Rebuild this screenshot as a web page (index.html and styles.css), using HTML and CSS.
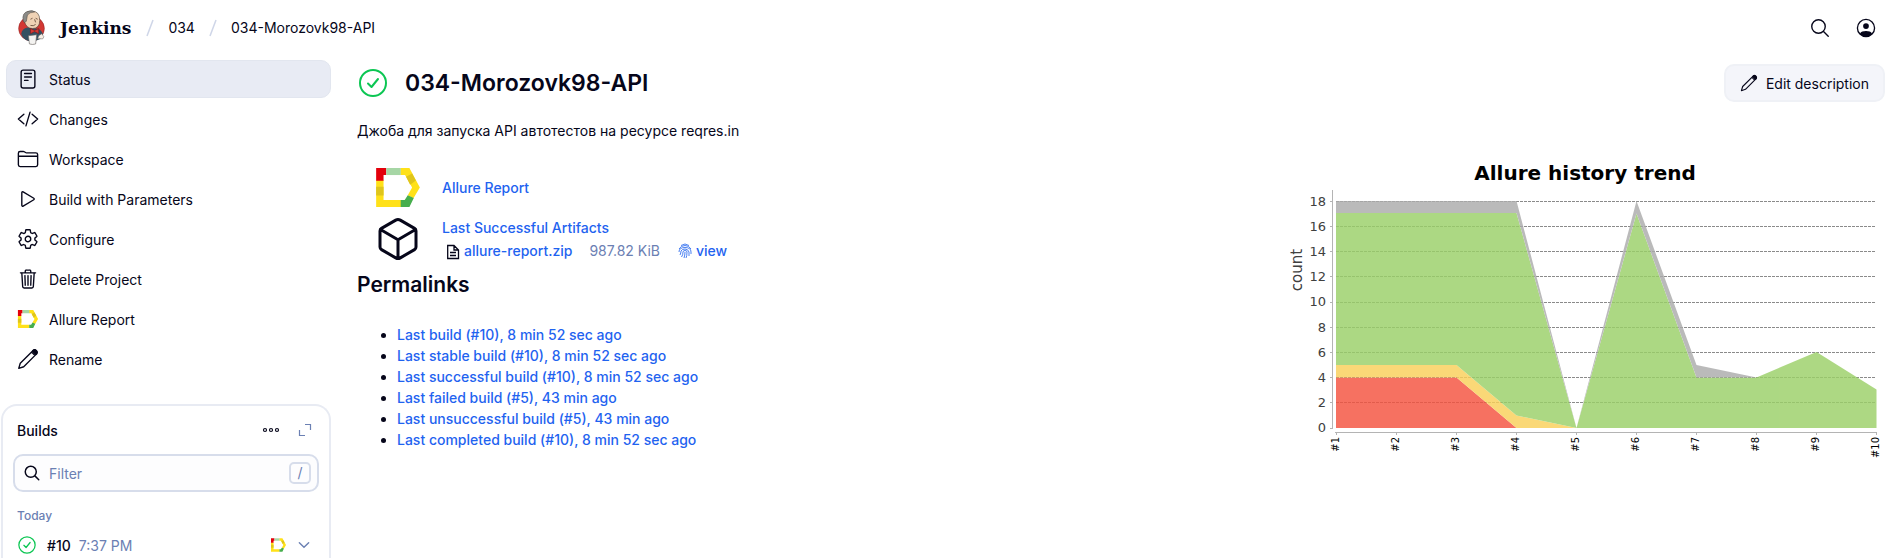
FILE: index.html
```html
<!DOCTYPE html>
<html lang="en">
<head>
<meta charset="utf-8">
<title>034-Morozovk98-API [Jenkins]</title>
<link rel="stylesheet" href="styles.css">
</head>
<body>
<svg class="sprite" aria-hidden="true">
  <symbol id="search" viewBox="0 0 512 512"><path d="M221.09 64a157.09 157.09 0 10157.09 157.09A157.1 157.1 0 00221.09 64zM338.29 338.29L448 448"/></symbol>
  <symbol id="pencil" viewBox="0 0 512 512"><path d="M40 474l36-118L352 80q14-14 28-28 32-24 62 4l14 14q28 30 4 62l-28 28-276 276zM340 94l78 78"/><path fill="currentColor" d="M384 50q32-20 62 10l6 6q30 30 10 62l-24 22-76-76z"/></symbol>
  <symbol id="check" viewBox="0 0 512 512"><circle cx="256" cy="256" r="208"/><path d="M336 192L232 320l-56-56"/></symbol>
  <symbol id="allure" viewBox="0 0 130 116"><g stroke="none">
    <path fill="#ffe119" d="M0 36h22v59h52v21H0zM72 0h27l31 58-19 32-17-9 13-23-21-37H72z"/>
    <path fill="#dfc51c" d="M0 56h22v26H0zM89 26l18-10 11 21-17 13z"/>
    <path fill="#e3000b" d="M0 0h30v21h-8v17H0z"/>
    <path fill="#a6d6a5" d="M30 0h43v21H30z"/>
    <path fill="#47ae4d" d="M73 95h12l9-14 18 8-13 27H73z"/></g></symbol>
</svg>

<header class="header">
  <a class="brand" href="#">
    <svg class="logo" viewBox="0 0 26 34" aria-hidden="true">
      <ellipse cx="13" cy="18" rx="12.500" ry="12" fill="#d33833" stroke="#8d1f20" stroke-width=".5"/>
      <path d="M3 23Q4 18 9 17l8 1q5 0 7 5l-1 4Q18 31 10 30 4 28 3 23z" fill="#335061"/>
      <path d="M6 11Q4 1 13 1q8 0 8 9 0 8-7 8-6 0-8-7z" fill="#efd2b5" stroke="#4b423c" stroke-width=".6"/>
      <path d="M5 11Q3 2 11 1q3-1 5 1-5 0-7 3l-1 6-2 1z" fill="#8a8a87" stroke="#4b423c" stroke-width=".5"/>
      <path d="M12 9l2-1M17 8l2 1M16 9l1 3M12 15q3 1 5-1" fill="none" stroke="#5e4636" stroke-width=".8"/>
      <path d="M12 18l4 2 4-2v5l-4-2-4 2z" fill="#d33833" stroke="#81100f" stroke-width=".5"/>
      <path d="M10 25l8-1-1 9q-3 1-6 0z" fill="#f4f3f1" stroke="#6b6561" stroke-width=".6"/>
      <path d="M20 25l3-2 2 3-1 2-5 0z" fill="#f6eee5" stroke="#6b6561" stroke-width=".5"/>
    </svg>
    <span class="brand-name">Jenkins</span>
  </a>
  <nav class="crumbs" aria-label="Breadcrumbs">
    <svg class="slash" viewBox="0 0 8 18" aria-hidden="true"><path d="M7 1L1 17"/></svg>
    <a href="#">034</a>
    <svg class="slash" viewBox="0 0 8 18" aria-hidden="true"><path d="M7 1L1 17"/></svg>
    <a href="#">034-Morozovk98-API</a>
  </nav>
  <div class="header-actions">
    <button type="button" aria-label="Search"><svg class="icon"><use href="#search"/></svg></button>
    <button type="button" aria-label="Account"><svg class="avatar" viewBox="0 0 20 20"><circle cx="10" cy="10" r="7.800" fill="none" stroke="currentColor" stroke-width="1.2"/><circle cx="10" cy="8.200" r="2.600"/><path d="M4.500 15Q6 12.800 10 12.800T15.500 15Q13.500 18 10 18T4.500 15z"/></svg></button>
  </div>
</header>

<div class="page">
  <aside class="sidebar">
    <nav class="tasks" aria-label="Tasks">
      <a class="task active" href="#"><svg class="icon" viewBox="0 0 512 512"><rect x="96" y="48" width="320" height="416" rx="48"/><path d="M176 128h160M176 208h160M176 288h80"/></svg>Status</a>
      <a class="task" href="#"><svg class="icon" viewBox="0 0 512 512"><path d="M160 368L32 256l128-112M352 368l128-112-128-112M304 96l-96 320"/></svg>Changes</a>
      <a class="task" href="#"><svg class="icon" viewBox="0 0 512 512"><path d="M440 432H72a40 40 0 01-40-40V120a40 40 0 0140-40h75.890a40 40 0 0122.190 6.720l27.840 18.560a40 40 0 0022.190 6.720H440a40 40 0 0140 40v240a40 40 0 01-40 40zM32 192h448"/></svg>Workspace</a>
      <a class="task" href="#"><svg class="icon" viewBox="0 0 512 512"><path d="M112 111v290c0 17.440 17 28.520 31 20.160l247.900-148.370c12.120-7.250 12.120-26.330 0-33.580L143 90.840c-14-8.360-31 2.720-31 20.160z"/></svg>Build with Parameters</a>
      <a class="task" href="#"><svg class="icon" viewBox="0 0 512 512"><path d="M262.29 192.31a64 64 0 1057.4 57.4 64.13 64.13 0 00-57.4-57.4zM416.39 256a154.34 154.34 0 01-1.53 20.79l45.21 35.46a10.81 10.81 0 012.45 13.75l-42.77 74a10.81 10.81 0 01-13.14 4.59l-44.9-18.08a16.11 16.11 0 00-15.17 1.75A164.48 164.48 0 01325 400.8a15.94 15.94 0 00-8.82 12.14l-6.73 47.89a11.08 11.08 0 01-10.68 9.17h-85.54a11.11 11.11 0 01-10.69-8.87l-6.72-47.82a16.07 16.07 0 00-9-12.22 155.3 155.3 0 01-21.46-12.57 16 16 0 00-15.11-1.71l-44.89 18.07a10.81 10.81 0 01-13.14-4.58l-42.77-74a10.8 10.8 0 012.45-13.75l38.21-30a16.05 16.05 0 006-14.08c-.36-4.17-.58-8.33-.58-12.5s.21-8.27.58-12.35a16 16 0 00-6.07-13.94l-38.19-30A10.81 10.81 0 0149.48 186l42.77-74a10.81 10.81 0 0113.14-4.59l44.9 18.08a16.11 16.11 0 0015.17-1.75A164.48 164.48 0 01187 111.2a15.94 15.94 0 008.82-12.14l6.73-47.89A11.08 11.08 0 01213.23 42h85.54a11.11 11.11 0 0110.69 8.87l6.72 47.82a16.07 16.07 0 009 12.22 155.3 155.3 0 0121.46 12.57 16 16 0 0015.11 1.71l44.89-18.07a10.81 10.81 0 0113.14 4.58l42.77 74a10.8 10.8 0 01-2.45 13.75l-38.21 30a16.05 16.05 0 00-6.05 14.08c.33 4.14.55 8.3.55 12.47z"/></svg>Configure</a>
      <a class="task" href="#"><svg class="icon" viewBox="0 0 512 512"><path d="M112 112l20 320c.95 18.49 14.4 32 32 32h184c17.67 0 30.87-13.51 32-32l20-320M80 112h352M192 112V72a23.93 23.93 0 0124-24h80a23.93 23.93 0 0124 24v40M256 176v224M184 176l8 224M328 176l-8 224"/></svg>Delete Project</a>
      <a class="task" href="#"><svg class="icon allure-task"><use href="#allure"/></svg>Allure Report</a>
      <a class="task" href="#"><svg class="icon"><use href="#pencil"/></svg>Rename</a>
    </nav>

    <section class="builds">
      <div class="builds-head">
        <h2>Builds</h2>
        <button type="button" aria-label="More"><svg class="dots" viewBox="0 0 18 6"><circle cx="3" cy="3" r="1.500"/><circle cx="9" cy="3" r="1.500"/><circle cx="15" cy="3" r="1.500"/></svg></button>
        <button type="button" aria-label="Expand"><svg class="expand" viewBox="0 0 14 14"><path d="M7 1.500h5.500V7M1.500 7v5.500H7"/></svg></button>
      </div>
      <label class="filter">
        <svg class="icon"><use href="#search"/></svg>
        <input type="text" placeholder="Filter" aria-label="Filter">
        <kbd>/</kbd>
      </label>
      <p class="day">Today</p>
      <div class="build">
        <svg class="icon ok"><use href="#check"/></svg>
        <a class="build-no" href="#">#10</a>
        <a class="build-time" href="#">7:37 PM</a>
        <svg class="allure-small"><use href="#allure"/></svg>
        <button type="button" aria-label="Build menu"><svg class="chevron" viewBox="0 0 12 12"><path d="M2 4l4 4 4-4"/></svg></button>
      </div>
    </section>
  </aside>

  <main class="main">
    <div class="title-bar">
      <svg class="icon ok"><use href="#check"/></svg>
      <h1>034-Morozovk98-API</h1>
      <button class="edit" type="button"><svg class="icon"><use href="#pencil"/></svg>Edit description</button>
    </div>
    <p class="description">Джоба для запуска API автотестов на ресурсе reqres.in</p>

    <div class="columns">
      <div class="details">
        <div class="entry">
          <span class="entry-icon"><svg class="allure-big"><use href="#allure"/></svg></span>
          <a href="#">Allure Report</a>
        </div>
        <div class="entry">
          <span class="entry-icon"><svg class="icon cube" viewBox="0 0 512 512"><path d="M448 341.37V170.61A32 32 0 00432.11 143l-152-88.46a47.94 47.94 0 00-48.24 0L79.89 143A32 32 0 0064 170.610v170.760A32 32 0 0079.890 369l152 88.460a48 48 0 0048.240 0l152-88.460A32 32 0 00448 341.370zM69 153.990l187 110 187-110M256 463.990v-200"/></svg></span>
          <div class="artifacts">
            <a href="#">Last Successful Artifacts</a>
            <div class="file">
              <svg class="file-icon" viewBox="0 0 14 16"><path d="M1.700 1.500h6.300l4.500 4.500v8.500H1.700zM8 1.500V6h4.500M4 8.500h6M4 11.500h6"/></svg>
              <a class="file-name" href="#">allure-report.zip</a>
              <span class="size">987.82 KiB</span>
              <a class="view" href="#"><svg class="finger" viewBox="0 0 14 16"><path d="M3 2.500Q7-.5 11 2.500M1 6q2-3.500 6-3.500T13 6M1 9q0-4.500 6-4.500T13 9v2M2 12q1-2 1-4 1-2 4-2t4 3v4M3.500 14Q5 12 5 9q0-1.500 2-1.500T9 9q0 4-1 6M6 15q1-3 1-6"/></svg>view</a>
            </div>
          </div>
        </div>
        <h2>Permalinks</h2>
        <ul>
          <li><a href="#">Last build (#10), 8 min 52 sec ago</a></li>
          <li><a href="#">Last stable build (#10), 8 min 52 sec ago</a></li>
          <li><a href="#">Last successful build (#10), 8 min 52 sec ago</a></li>
          <li><a href="#">Last failed build (#5), 43 min ago</a></li>
          <li><a href="#">Last unsuccessful build (#5), 43 min ago</a></li>
          <li><a href="#">Last completed build (#10), 8 min 52 sec ago</a></li>
        </ul>
      </div>

      <svg class="chart" viewBox="0 0 600 300" role="img" aria-label="Allure history trend">
        <text class="chart-title" x="300" y="20">Allure history trend</text>
        <text class="chart-count" transform="translate(17 110) rotate(-90)">count</text>
        <path class="grid" d="M51 41.500h540M51 66.500h540M51 91.500h540M51 116.500h540M51 142.500h540M51 167.500h540M51 192.500h540M51 217.500h540M51 242.500h540"/>
        <g class="areas">
          <path fill="#f5523f" d="M51 217.500h120.500l60 50.500H51z"/>
          <path fill="#fad05a" d="M51 205h120.500l60 50.500 60 12.500h-60l-60-50.500H51z"/>
          <path fill="#9bd068" d="M51 53h180.500l60 215 60-214.500 60 164h60l60-25.500 60 37.500V268H291.500l-60-12.500-60-50.500H51z"/>
          <path fill="#acacac" d="M51 41h180.500l60 227 60-227 60 164 60 12.500h-60l-60-164-60 214.500-60-215H51z"/>
        </g>
        <path class="axis" d="M47.500 30v239M50 272.500h541.500M45 41.500h3M45 66.500h3M45 91.500h3M45 116.500h3M45 142.500h3M45 167.500h3M45 192.500h3M45 217.500h3M45 242.500h3M45 268.500h3M51.500 272v3M111.500 272v3M171.500 272v3M231.500 272v3M291.500 272v3M351.500 272v3M411.500 272v3M471.500 272v3M531.500 272v3M591.500 272v3"/>
        <g class="y-labels">
          <text x="41" y="46">18</text><text x="41" y="71">16</text><text x="41" y="96">14</text><text x="41" y="121">12</text><text x="41" y="146">10</text><text x="41" y="172">8</text><text x="41" y="197">6</text><text x="41" y="222">4</text><text x="41" y="247">2</text><text x="41" y="272">0</text>
        </g>
        <g class="x-labels">
          <text transform="translate(54 277) rotate(-90)">#1</text><text transform="translate(114 277) rotate(-90)">#2</text><text transform="translate(174 277) rotate(-90)">#3</text><text transform="translate(234 277) rotate(-90)">#4</text><text transform="translate(294 277) rotate(-90)">#5</text><text transform="translate(354 277) rotate(-90)">#6</text><text transform="translate(414 277) rotate(-90)">#7</text><text transform="translate(474 277) rotate(-90)">#8</text><text transform="translate(534 277) rotate(-90)">#9</text><text transform="translate(594 277) rotate(-90)">#10</text>
        </g>
      </svg>
    </div>
  </main>
</div>
</body>
</html>
```
FILE: styles.css
```css
:root {
  --text: #06061a;
  --muted: #6b80b3;
  --link: #1f63f0;
  --line: #e8ebf3;
  --green: #0cc653;
}

* { box-sizing: border-box; }

body {
  margin: 0;
  height: 100vh;
  overflow: hidden;
  display: flex;
  flex-direction: column;
  background: #fff;
  color: var(--text);
  font: 400 14px/21px Inter, "Noto Sans", sans-serif;
}

a { color: var(--link); text-decoration: none; }
h1, h2, p, ul { margin: 0; }
button { padding: 0; border: 0; background: none; color: inherit; font: inherit; display: flex; align-items: center; }
.sprite { position: absolute; width: 0; height: 0; }
.icon { flex: none; width: 22px; height: 22px; fill: none; stroke: currentColor; stroke-width: 32; stroke-linecap: round; stroke-linejoin: round; }
.ok { color: var(--green); }

.header { display: flex; align-items: center; height: 55px; flex: none; padding: 0 14px 0 18px; }
.header a { color: var(--text); }
.brand { display: flex; align-items: center; gap: 15px; }
.logo { width: 27px; height: 35px; }
.brand-name { font: 700 17px/24px "DejaVu Serif", serif; }
.crumbs { display: flex; align-items: center; gap: 14px; padding-left: 15px; }
.slash { width: 8px; height: 18px; fill: none; stroke: #cfd6e8; stroke-width: 1.5; }
.header-actions { display: flex; align-items: center; gap: 24px; margin-left: auto; }
.avatar { width: 22px; height: 22px; fill: currentColor; }

.page { display: flex; flex: 1; min-height: 0; }
.sidebar { display: flex; flex-direction: column; flex: none; width: 331px; }
.tasks { display: flex; flex-direction: column; gap: 2px; padding: 5px 0 0 6px; }
.task { display: flex; align-items: center; gap: 10px; height: 38px; padding: 0 11px; border-radius: 10px; color: var(--text); }
.task.active { background: #e8ebf4; border: 1px solid #e2e6ef; padding: 0 10px; }
.allure-task { height: 18px; }

.builds { flex: 1; margin: 26px 0 0 1px; padding: 13px 10px 0; border: 2px solid var(--line); border-bottom: 0; border-radius: 16px 16px 0 0; }
.builds-head { display: flex; align-items: center; gap: 18px; height: 22px; padding: 0 7px 0 4px; }
.builds-head h2 { font-size: 14px; font-weight: 500; line-height: 21px; margin-right: auto; }
.dots { width: 18px; height: 6px; fill: none; stroke: currentColor; stroke-width: 1.2; }
.expand { width: 14px; height: 14px; fill: none; stroke: var(--muted); stroke-width: 1.2; }
.filter { display: flex; align-items: center; height: 38px; margin-top: 13px; padding: 0 6px 0 8px; border: 2px solid #d7ddeb; border-radius: 10px; background: #fdfdfe; }
.filter .icon { width: 18px; height: 18px; stroke-width: 42; }
.filter input { flex: 1; min-width: 0; padding: 0 8px; border: 0; outline: 0; background: none; color: var(--text); font: inherit; }
.filter input::placeholder { color: var(--muted); opacity: 1; }
.filter kbd { width: 22px; height: 22px; border: 2px solid #d7ddeb; border-radius: 5px; color: var(--muted); font: inherit; line-height: 17px; text-align: center; }
.day { margin-top: 13px; padding-left: 4px; color: var(--muted); font-size: 12px; font-weight: 500; }
.build { display: flex; align-items: center; height: 38px; padding: 0 8px 0 4px; }
.build .ok { width: 20px; height: 20px; }
.build-no { margin-left: 10px; color: var(--text); font-weight: 500; }
.build-time { margin: 0 auto 0 8px; color: var(--muted); }
.allure-small { width: 15px; height: 14px; margin-right: 11px; }
.chevron { width: 14px; height: 14px; fill: none; stroke: var(--muted); stroke-width: 1.2; stroke-linecap: round; }

.main { flex: 1; min-width: 0; padding: 9px 6px 0 26px; }
.title-bar { display: flex; align-items: center; height: 38px; }
.title-bar .ok { width: 32px; height: 32px; }
.title-bar h1 { margin-left: 16px; font-size: 23px; font-weight: 600; line-height: 32px; }
.edit { height: 38px; margin-left: auto; padding: 0 14px; gap: 8px; border: 2px solid #eff1f6; border-radius: 10px; background: #f4f5fa; }
.edit .icon { width: 18px; height: 18px; }
.description { margin-top: 18px; }
.columns { display: flex; align-items: flex-start; justify-content: space-between; margin-top: 19px; }
.details { padding-top: 1px; font-weight: 500; }
.entry { display: flex; align-items: center; gap: 20px; padding-left: 17px; height: 52px; }
.entry-icon { display: flex; align-items: center; justify-content: center; width: 48px; height: 48px; }
.allure-big { width: 44px; height: 39px; }
.cube { width: 48px; height: 48px; }
.file { display: flex; align-items: center; padding: 2px 0 0 4px; }
.file-icon { width: 14px; height: 16px; margin: 2px 4px 0 0; fill: none; stroke: var(--text); stroke-width: 1.3; }
.file-name { font-weight: 500; }
.size { margin: 0 18px 0 17px; color: var(--muted); font-weight: 400; }
.view { display: flex; align-items: center; gap: 4px; }
.finger { width: 14px; height: 16px; fill: none; stroke: currentColor; stroke-width: 1; opacity: .8; }
.details h2 { margin-top: 5px; font-size: 21px; font-weight: 600; line-height: 30px; }
.details ul { margin-top: 24px; padding-left: 40px; }

.chart { flex: none; width: 600px; height: 300px; font-family: "DejaVu Sans", sans-serif; font-weight: 400; }
.chart-title { font-size: 20px; font-weight: 700; text-anchor: middle; fill: #000; }
.chart-count { font-size: 15px; text-anchor: middle; fill: #404040; }
.y-labels { font-size: 13px; text-anchor: end; fill: #404040; }
.x-labels { font-size: 10px; text-anchor: end; fill: #000; }
.grid { stroke: #8a8a8a; stroke-width: 1; stroke-dasharray: 3 1; fill: none; }
.areas { opacity: .82; }
.axis { stroke: #b4b4b4; stroke-width: 1; fill: none; }
```
